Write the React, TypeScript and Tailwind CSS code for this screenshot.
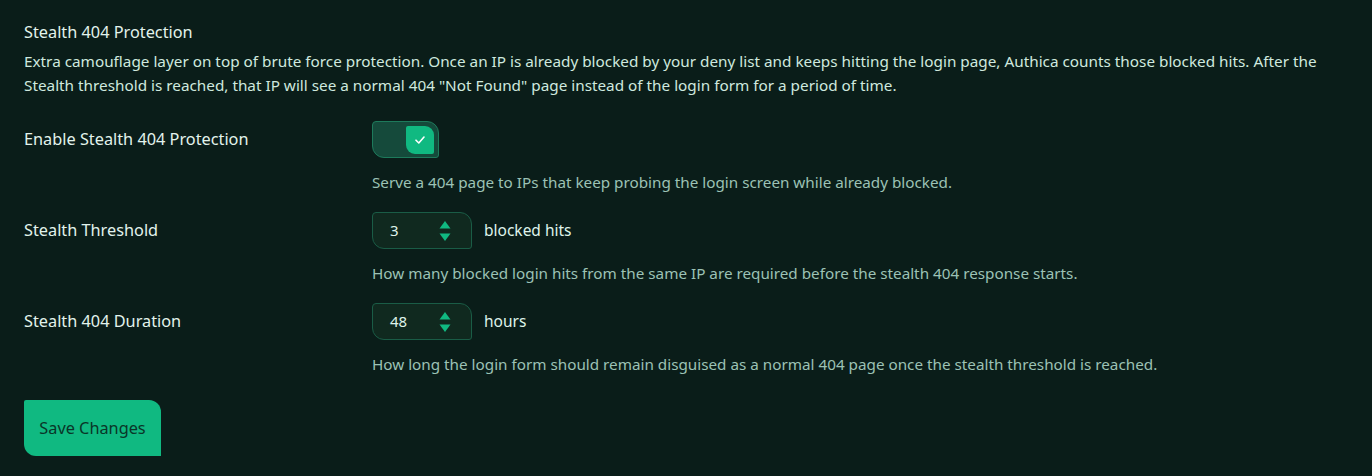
import React from "react";

const font = { fontFamily: '"Noto Sans", "Open Sans", sans-serif' };

function Toggle() {
  return (
    <div className="flex h-[37px] w-[67px] items-center justify-end rounded-tl-[4px] rounded-tr-[12px] rounded-bl-[12px] rounded-br-[3px] border border-[#1d7a5b] bg-[#154a3b] pr-[4px]">
      <div className="flex h-[28px] w-[28px] items-center justify-center rounded-tl-[2px] rounded-tr-[9px] rounded-bl-[9px] rounded-br-[2px] bg-[#10b981]">
        <svg width="10" height="8" viewBox="0 0 10 8" fill="none">
          <path d="M1 4.2 L3.8 7 L9 1" stroke="#ffffff" strokeWidth="1.6" strokeLinecap="round" strokeLinejoin="round" />
        </svg>
      </div>
    </div>
  );
}

function NumberInput({ value }: { value: string }) {
  return (
    <div className="flex h-[37px] w-[100px] items-center justify-between rounded-tl-[4px] rounded-tr-[12px] rounded-bl-[12px] rounded-br-[3px] border border-[#1a5c46] bg-[#10291f] pl-[17px] pr-[20px]">
      <span className="text-[15px] text-[#dff3ea]">{value}</span>
      <svg width="12" height="22" viewBox="0 0 12 22">
        <path d="M6 1 L11.5 8.5 H0.5 Z" fill="#10b981" />
        <path d="M6 21 L11.5 13.5 H0.5 Z" fill="#10b981" />
      </svg>
    </div>
  );
}

function Row({ label, children, helper, first }: { label: string; children: React.ReactNode; helper: string; first?: boolean }) {
  return (
    <div className={`grid grid-cols-[348px_1fr] ${first ? "mt-[24px]" : "mt-[20px]"}`}>
      <div className="flex h-[37px] items-center text-[16.3px] text-[#e2f3ec]">{label}</div>
      <div className="flex flex-col">
        {children}
        <div className="mt-[14px] text-[15.25px] leading-[20px] text-[#9cc2b5]">{helper}</div>
      </div>
    </div>
  );
}

export default function App() {
  return (
    <div className="min-h-[476px] w-full bg-[#0a1d19] px-[24px] pt-[21px]" style={font}>
      <div className="text-[16.3px] leading-[22px] text-[#e2f3ec]">Stealth 404 Protection</div>
      <p className="mt-[6px] text-[15.3px] leading-[24px] text-[#cfe9df]">
        Extra camouflage layer on top of brute force protection. Once an IP is already blocked by your deny list and keeps hitting the login page, Authica counts those blocked hits. After the Stealth threshold is reached, that IP will see a normal 404 "Not Found" page instead of the login form for a period of time.
      </p>
      <Row first label="Enable Stealth 404 Protection" helper="Serve a 404 page to IPs that keep probing the login screen while already blocked.">
        <Toggle />
      </Row>
      <Row label="Stealth Threshold" helper="How many blocked login hits from the same IP are required before the stealth 404 response starts.">
        <div className="flex items-center gap-[12px]">
          <NumberInput value="3" />
          <span className="text-[15.5px] text-[#dff3ea]">blocked hits</span>
        </div>
      </Row>
      <Row label="Stealth 404 Duration" helper="How long the login form should remain disguised as a normal 404 page once the stealth threshold is reached.">
        <div className="flex items-center gap-[12px]">
          <NumberInput value="48" />
          <span className="text-[15.5px] text-[#dff3ea]">hours</span>
        </div>
      </Row>
      <button className="mt-[26px] h-[56px] w-[137px] rounded-tl-[2px] rounded-tr-[12px] rounded-bl-[12px] rounded-br-[0px] bg-[#10b981] text-[16.3px] text-[#0a3528]" style={font}>
        Save Changes
      </button>
    </div>
  );
}
